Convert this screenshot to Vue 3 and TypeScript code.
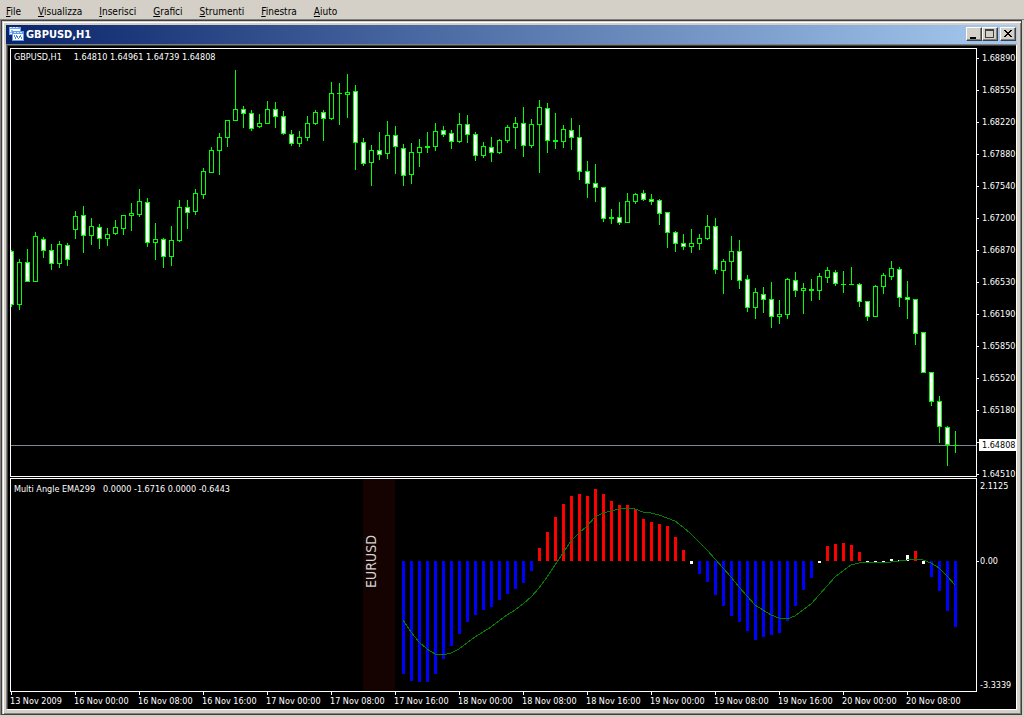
<script setup lang="ts">
type Kind = 'up' | 'down'
interface Candle { x: number; high: number; top: number; bottom: number; low: number; kind: Kind }
interface Bar { x: number; y: number; h: number; cls: string }

const STEP = 8
const PRICE_TOP = 49
const ANGLE_TOP = 479
const ZERO = 561

const menus = [
  ['F', 'ile'], ['V', 'isualizza'], ['I', 'nserisci'], ['G', 'rafici'],
  ['S', 'trumenti'], ['F', 'inestra'], ['A', 'iuto'],
]

// the blank mark keeps its tick; the bid badge takes the place of its label
const prices = [
  '1.68890', '1.68550', '1.68220', '1.67880', '1.67540', '1.67200', '1.66870',
  '1.66530', '1.66190', '1.65850', '1.65520', '1.65180', '', '1.64510',
]

const times = [
  '13 Nov 2009', '16 Nov 00:00', '16 Nov 08:00', '16 Nov 16:00', '17 Nov 00:00',
  '17 Nov 08:00', '17 Nov 16:00', '18 Nov 00:00', '18 Nov 08:00', '18 Nov 16:00',
  '19 Nov 00:00', '19 Nov 08:00', '19 Nov 16:00', '20 Nov 00:00', '20 Nov 08:00',
]

// high, body top, body bottom, low, 1 = bearish
const rawCandles: number[][] = [
  [250, 251, 305, 307, 1], [259, 262, 305, 310, 0], [249, 262, 282, 282, 1], [232, 236, 282, 282, 0],
  [237, 239, 251, 258, 1], [244, 250, 264, 270, 1], [241, 244, 264, 268, 0], [243, 245, 260, 266, 1],
  [211, 216, 230, 239, 0], [206, 215, 236, 253, 1], [218, 226, 236, 245, 0], [224, 227, 239, 249, 1],
  [228, 234, 239, 246, 0], [220, 227, 234, 235, 0], [215, 215, 229, 235, 0], [203, 213, 216, 231, 0],
  [189, 201, 215, 217, 0], [198, 202, 243, 247, 1], [223, 239, 243, 260, 0], [238, 239, 257, 268, 1],
  [226, 240, 257, 266, 0], [200, 207, 241, 242, 0], [200, 207, 213, 229, 1], [189, 193, 212, 215, 0],
  [168, 171, 195, 199, 0], [147, 150, 173, 173, 0], [133, 137, 151, 175, 0], [120, 120, 138, 147, 0],
  [70, 109, 121, 121, 0], [106, 109, 114, 128, 1], [110, 113, 129, 131, 1], [114, 123, 127, 128, 0],
  [101, 109, 124, 124, 0], [102, 109, 117, 128, 1], [111, 116, 134, 135, 1], [130, 134, 144, 146, 1],
  [131, 137, 144, 147, 0], [116, 123, 138, 141, 0], [110, 112, 124, 125, 0], [110, 112, 119, 141, 1],
  [82, 93, 119, 120, 0], [83, 93, 94, 125, 0], [74, 92, 95, 118, 0], [85, 91, 143, 170, 1],
  [138, 142, 164, 166, 1], [145, 150, 163, 186, 0], [132, 150, 155, 160, 1], [121, 135, 154, 159, 0],
  [126, 135, 147, 174, 1], [144, 148, 176, 186, 1], [143, 152, 175, 184, 0], [139, 147, 153, 167, 0],
  [132, 146, 148, 153, 0], [123, 131, 147, 151, 0], [126, 130, 135, 137, 1], [130, 133, 142, 149, 1],
  [113, 124, 142, 143, 0], [115, 124, 135, 143, 1], [132, 134, 156, 161, 1], [142, 146, 156, 158, 0],
  [137, 147, 153, 162, 1], [139, 140, 153, 154, 0], [125, 127, 141, 143, 0], [117, 123, 128, 149, 0],
  [107, 123, 146, 157, 1], [119, 124, 146, 148, 0], [100, 107, 125, 173, 0], [103, 108, 141, 153, 1],
  [113, 140, 142, 149, 0], [125, 129, 142, 148, 0], [118, 130, 138, 150, 1], [125, 137, 172, 180, 1],
  [161, 171, 184, 198, 1], [164, 183, 188, 202, 1], [187, 187, 219, 222, 1], [209, 217, 219, 224, 0],
  [202, 217, 223, 225, 1], [193, 201, 223, 223, 0], [193, 194, 202, 204, 0], [190, 193, 200, 201, 1],
  [194, 199, 202, 205, 1], [199, 200, 214, 225, 1], [212, 212, 233, 248, 1], [231, 232, 244, 252, 1],
  [234, 243, 247, 250, 1], [229, 243, 247, 253, 0], [234, 238, 244, 250, 0], [215, 226, 239, 240, 0],
  [218, 226, 270, 274, 1], [259, 261, 271, 294, 0], [236, 251, 262, 280, 0], [240, 251, 281, 289, 1],
  [275, 279, 308, 312, 1], [288, 292, 308, 319, 0], [287, 294, 300, 313, 1], [282, 299, 317, 328, 1],
  [300, 314, 317, 324, 0], [278, 279, 315, 319, 0], [272, 280, 291, 297, 1], [283, 288, 291, 314, 0],
  [279, 289, 291, 301, 0], [273, 276, 291, 300, 0], [267, 270, 278, 283, 0], [270, 272, 284, 286, 1],
  [271, 284, 285, 293, 0], [267, 284, 285, 285, 0], [283, 284, 302, 307, 1], [301, 301, 317, 321, 1],
  [285, 286, 317, 317, 0], [273, 275, 287, 294, 0], [261, 268, 277, 280, 0], [267, 269, 298, 307, 1],
  [281, 297, 300, 319, 1], [299, 299, 334, 345, 1], [332, 332, 373, 373, 1], [372, 372, 402, 406, 1],
  [396, 401, 427, 443, 1], [426, 427, 445, 466, 1], [431, 445, 446, 453, 0],
]

const candles: Candle[] = rawCandles.map(([high, top, bottom, low, bear], i) => ({
  x: i * STEP,
  high: high - PRICE_TOP,
  top: top - PRICE_TOP,
  bottom: bottom - PRICE_TOP,
  low: low - PRICE_TOP,
  kind: bear ? 'down' : 'up',
}))

// histogram ends, starting at the 50th hour
const ends = [
  674, 681, 682, 682, 674, 659, 646, 634, 622, 615, 610, 607, 600, 594, 589, 583, 571,
  548, 532, 517, 504, 496, 494, 496, 489, 494, 501, 505, 505, 509, 519, 522, 524, 526, 537, 550,
  564, 574, 582, 595, 606, 616, 622, 631, 640, 637, 635, 633, 621, 606, 590, 578, 563,
  546, 544, 543, 545, 552, 562, 563, 562, 559, 560, 555, 551, 564, 577, 591, 611, 627,
]
const FIRST_BAR = 49
const bars: Bar[] = ends.map((end, i) => {
  const length = Math.abs(end - ZERO)
  const cls = length < 7 ? 'flat' : end < ZERO ? 'rise' : 'fall'
  return {
    x: (i + FIRST_BAR) * STEP - 1,
    y: Math.min(end, ZERO) - ANGLE_TOP,
    h: length,
    cls,
  }
})

const average = [
  620, 632, 642, 649, 654, 655, 653, 649, 643, 637, 632, 627, 621, 615, 610, 604, 597,
  588, 577, 565, 553, 541, 533, 526, 517, 513, 511, 509, 508, 509, 512, 513, 515, 518, 521, 527,
  534, 542, 550, 559, 568, 577, 587, 596, 605, 610, 615, 618, 619, 616, 610, 604, 595,
  586, 577, 571, 565, 563, 562, 563, 562, 562, 561, 560, 559, 560, 563, 568, 576, 585,
]
const averagePoints = average
  .map((y, i) => `${(i + FIRST_BAR) * STEP},${y - ANGLE_TOP}`)
  .join(' ')
</script>

<template>
  <div class="app">
    <nav class="menubar">
      <button v-for="m in menus" :key="m[0] + m[1]" type="button" class="menu"><u>{{ m[0] }}</u>{{ m[1] }}</button>
    </nav>
    <main class="workspace">
      <section class="window">
        <header class="titlebar">
          <svg class="logo" width="16" height="16" viewBox="0 0 16 16" shape-rendering="crispEdges">
            <path d="M0 1h12v8H0z" fill="#6ea6f2" />
            <path d="M1 1h2v1H1zM4 1h2v1H4zM7 1h2v1H7z" fill="#d8e8ff" />
            <path d="M1 3h10v5H1z" fill="#fff" />
            <path d="M1 6h1V4h1v1h1v1h1V5h1" fill="none" stroke="#8ab8f4" />
            <path d="M3 5h12v10H3z" fill="#5f9bee" />
            <path d="M5 6h2v1H5zM8 6h2v1H8zM11 6h2v1h-2z" fill="#d8e8ff" />
            <path d="M4 8h10v6H4z" fill="#fff" />
            <path d="M5 9h1v2H5zM6 11h1v2H6zM7 9h1v2H7zM8 10h1v2H8zM9 12h1v1H9zM10 10h1v2h-1zM11 9h1v2h-1zM12 11h1v2h-1z" fill="#4c88dc" />
          </svg>
          <h1>GBPUSD,H1</h1>
          <div class="controls">
            <button type="button" class="ctl" aria-label="Minimize">
              <svg width="14" height="12" shape-rendering="crispEdges"><path d="M3 9h6v2H3z" /></svg>
            </button>
            <button type="button" class="ctl" aria-label="Maximize">
              <svg width="14" height="12" shape-rendering="crispEdges"><path fill="#404040" fill-rule="evenodd" d="M2 1h9v9H2zM3 3v6h7V3z" /></svg>
            </button>
            <button type="button" class="ctl close" aria-label="Close">
              <svg width="14" height="12" shape-rendering="crispEdges"><path d="M3 2h2v1h1v1h2V3h1V2h2v1h-1v1H9v1H8v1h1v1h1v1h1v1H9V8H8V7H6v1H5v1H3V8h1V7h1V6h1V5H5V4H4V3H3z" /></svg>
            </button>
          </div>
        </header>
        <div class="client">
          <div class="plot price">
            <p class="caption"><span>GBPUSD,H1</span><span>1.64810 1.64961 1.64739 1.64808</span></p>
            <svg class="canvas" shape-rendering="crispEdges">
              <rect class="bid" x="0" y="396" width="100%" height="1" />
              <g v-for="c in candles" :key="c.x" :class="c.kind">
                <rect class="edge" :x="c.x" :y="c.high" width="1" :height="c.low - c.high" />
                <rect class="edge" :x="c.x - 2" :y="c.top" width="5" :height="c.bottom - c.top" />
                <rect v-if="c.bottom - c.top > 2" class="core" :x="c.x - 1" :y="c.top + 1" width="3" :height="c.bottom - c.top - 2" />
              </g>
            </svg>
          </div>
          <div class="scale price-scale">
            <span v-for="(p, i) in prices" :key="i" class="mark">{{ p }}</span>
            <span class="badge">1.64808</span>
          </div>
          <div class="plot angle">
            <p class="caption"><span>Multi Angle EMA299</span><span>0.0000 -1.6716 0.0000 -0.6443</span></p>
            <svg class="canvas" shape-rendering="crispEdges">
              <rect class="band" x="352" y="0" width="32" height="212" />
              <text class="pair" transform="translate(365 109) rotate(-90)">EURUSD</text>
              <rect v-for="b in bars" :key="b.x" :class="b.cls" :x="b.x" :y="b.y" width="3" :height="b.h" />
              <polyline class="average" :points="averagePoints" />
            </svg>
          </div>
          <div class="scale angle-scale">
            <span>2.1125</span>
            <span class="zero">0.00</span>
            <span class="lowest">-3.3339</span>
          </div>
          <div class="times">
            <span v-for="t in times" :key="t" class="time">{{ t }}</span>
          </div>
        </div>
      </section>
    </main>
  </div>
</template>

<style>
body {
  margin: 0;
  background: #d4d0c8;
}
</style>

<style scoped>
.app {
  display: flex;
  flex-direction: column;
  min-height: 100vh;
  box-sizing: border-box;
  background: #d4d0c8;
  font-family: "DejaVu Sans Condensed", "DejaVu Sans", sans-serif;
  overflow: hidden;
}
.menubar {
  display: flex;
  gap: 17px;
  height: 19px;
  padding-left: 6px;
  align-items: center;
}
.menu {
  border: 0;
  padding: 5px 0 0;
  background: none;
  color: #000;
  font: 10px/14px "DejaVu Sans Condensed", "DejaVu Sans", sans-serif;
}
.menu u {
  text-underline-offset: 1px;
}
.workspace {
  border-top: 1px solid #808080;
  border-left: 1px solid #808080;
  padding-right: 2px;
}
.window {
  padding: 4px;
  border: 1px solid #404040;
  box-shadow: inset 1px 1px #d4d0c8, inset 2px 2px #fff, inset -1px -1px #808080;
}
.titlebar {
  display: flex;
  align-items: center;
  height: 18px;
  padding: 0 1px 1px 3px;
  background: linear-gradient(90deg, #0a246a, #a6caf0);
}
.logo {
  flex: none;
}
h1 {
  margin: 0 auto 0 1px;
  padding-top: 1px;
  color: #fff;
  font-size: 11px;
  line-height: 16px;
  font-weight: bold;
}
.controls {
  display: flex;
}
.ctl {
  box-sizing: border-box;
  width: 16px;
  height: 14px;
  padding: 0;
  border: 1px solid;
  border-color: #fff #404040 #404040 #fff;
  background: #d4d0c8;
  box-shadow: inset -1px -1px #808080;
}
.ctl svg {
  display: block;
}
.close {
  margin-left: 2px;
}
.client {
  display: grid;
  grid-template-columns: minmax(0, 1fr) 39px;
  border: 1px solid;
  border-color: #808080 #fff #fff #808080;
  box-shadow: inset 1px 1px #404040;
  padding: 3px 0 0 3px;
  background: #000;
  color: #fff;
  font-size: 9px;
  line-height: 12px;
}
.plot {
  position: relative;
  border: 1px solid #fff;
}
.price {
  height: 427px;
  margin-bottom: 1px;
}
.angle {
  height: 212px;
}
.caption {
  position: absolute;
  left: 3px;
  top: 2px;
  display: flex;
  gap: 8px;
  margin: 0;
  white-space: nowrap;
}
.price .caption {
  gap: 12px;
}
.angle .caption {
  top: 4px;
}
.canvas {
  display: block;
  width: 100%;
  height: 100%;
  overflow: hidden;
}
.edge {
  fill: #0f0;
}
.up .core {
  fill: #000;
}
.down .core {
  fill: #fff;
}
.bid {
  fill: #778899;
}
.band {
  fill: #140300;
}
.pair {
  fill: #d3d3d3;
  font-size: 14px;
}
.rise {
  fill: #f00;
}
.fall {
  fill: #00f;
}
.flat {
  fill: #fff;
}
.average {
  fill: none;
  stroke: #008000;
  stroke-width: 1;
}
.scale {
  position: relative;
  display: flex;
  flex-direction: column;
}
.price-scale {
  padding-top: 4px;
  height: 425px;
}
.mark {
  display: flex;
  flex: none;
  align-items: center;
  height: 12px;
  margin-bottom: 20px;
}
.mark:nth-last-of-type(2) {
  margin-bottom: 0;
}
.mark::before,
.zero::before {
  content: "";
  width: 2px;
  height: 1px;
  margin-right: 3px;
  background: #fff;
}
.badge {
  position: absolute;
  left: 2px;
  right: 0;
  top: 391px;
  padding-left: 3px;
  background: #fff;
  color: #000;
}
.angle-scale {
  padding: 2px 0 1px 3px;
}
.zero {
  display: flex;
  align-items: center;
  margin: 63px 0 0 -3px;
}
.zero::before {
  margin-right: 1px;
}
.lowest {
  margin-top: auto;
}
.times {
  display: flex;
  grid-column: 1 / -1;
  height: 17px;
  overflow: hidden;
}
.time {
  flex: none;
  width: 64px;
  padding-top: 3px;
  white-space: nowrap;
  background: linear-gradient(#fff, #fff) 1px 0 / 1px 3px no-repeat;
}
</style>
